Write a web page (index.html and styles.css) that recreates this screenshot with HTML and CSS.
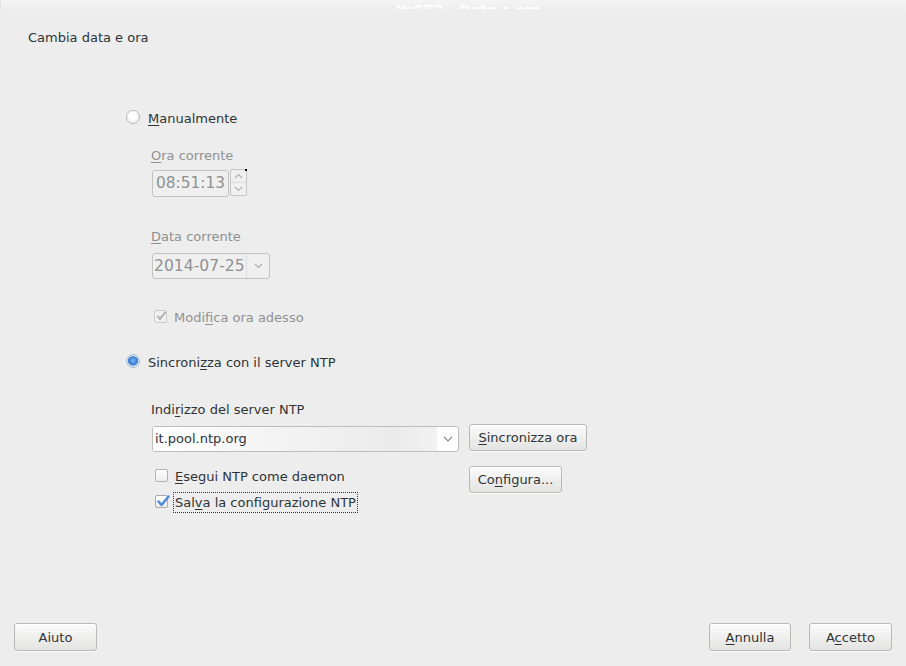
FILE: index.html
```html
<!DOCTYPE html>
<html lang="it">
<head>
<meta charset="utf-8">
<title>Data e ora</title>
<link rel="stylesheet" href="styles.css">
</head>
<body>
<div class="titlebar"><span class="titletext">YaST2 - Data e ora</span></div>
<div class="heading">Cambia data e ora</div>

<div class="options">
  <div class="radio-row">
    <span class="radio"></span>
    <span class="label"><u>M</u>anualmente</span>
  </div>

  <div class="sub">
    <div class="field-label disabled"><u>O</u>ra corrente</div>
    <div class="spin">
      <div class="spin-entry">08:51:13</div>
      <div class="spin-buttons">
        <span class="spin-btn"><svg width="9" height="6" viewBox="0 0 9 6"><path d="M1 5 L4.5 1.5 L8 5" fill="none" stroke="#b4b4b4" stroke-width="1.2"/></svg></span>
        <span class="spin-btn"><svg width="9" height="6" viewBox="0 0 9 6"><path d="M1 1 L4.5 4.5 L8 1" fill="none" stroke="#b4b4b4" stroke-width="1.2"/></svg></span>
        <span class="spin-dot"></span>
      </div>
    </div>

    <div class="field-label disabled date-label"><u>D</u>ata corrente</div>
    <div class="combo-date">
      <span class="combo-text">2014-07-25</span>
      <span class="combo-arrow"><svg width="9" height="6" viewBox="0 0 9 6"><path d="M1 1 L4.5 4.5 L8 1" fill="none" stroke="#b0b0b0" stroke-width="1.2"/></svg></span>
    </div>

    <div class="check-row disabled modifica">
      <span class="checkbox disabled-box"><svg width="12" height="12" viewBox="0 0 12 12"><path d="M2.5 6 L5 9 L10.5 2" fill="none" stroke="#a9a9a9" stroke-width="1.8"/></svg></span>
      <span class="label">Modi<u>f</u>ica ora adesso</span>
    </div>
  </div>

  <div class="radio-row ntp-radio">
    <span class="radio selected"></span>
    <span class="label">Sincroni<u>z</u>za con il server NTP</span>
  </div>

  <div class="sub">
    <div class="field-label server-label">Indi<u>r</u>izzo del server NTP</div>
    <div class="ntp-row">
      <div class="combo-ntp">
        <span class="ntp-entry">it.pool.ntp.org</span>
        <span class="ntp-arrow"><svg width="10" height="6" viewBox="0 0 10 6"><path d="M1 1 L5 5 L9 1" fill="none" stroke="#8a8a8a" stroke-width="1.2"/></svg></span>
      </div>
      <button class="btn sync-btn"><u>S</u>incronizza ora</button>
    </div>
    <div class="ntp-row2">
      <div class="checks">
        <div class="check-row">
          <span class="checkbox"></span>
          <span class="label"><u>E</u>segui NTP come daemon</span>
        </div>
        <div class="check-row">
          <span class="checkbox checked"><svg width="14" height="13" viewBox="0 0 14 13"><path d="M2.5 6.5 L5.5 10 L12.5 1.5" fill="none" stroke="#4a8ad8" stroke-width="2.4" stroke-linecap="round" stroke-linejoin="round"/></svg></span>
          <span class="label focus">Sal<u>v</u>a la configurazione NTP</span>
        </div>
      </div>
      <button class="btn conf-btn">Co<u>n</u>figura...</button>
    </div>
  </div>
</div>

<div class="spacer"></div>

<div class="footer">
  <button class="btn foot-btn">Aiuto</button>
  <div class="foot-right">
    <button class="btn foot-btn annulla"><u>A</u>nnulla</button>
    <button class="btn foot-btn accetto">A<u>c</u>cetto</button>
  </div>
</div>
</body>
</html>
```

FILE: styles.css
```css
html, body {
  margin: 0;
  padding: 0;
}
body {
  width: 906px;
  height: 666px;
  background: #ededed;
  font-family: "DejaVu Sans", "Liberation Sans", sans-serif;
  font-size: 13px;
  color: #2e3436;
  display: flex;
  flex-direction: column;
  overflow: hidden;
}
u {
  text-decoration: underline;
  text-underline-offset: 2px;
  text-decoration-thickness: 1px;
}
.titlebar {
  height: 9px;
  background: linear-gradient(#f4f4f4, #eeeeee);
  overflow: hidden;
  display: flex;
  justify-content: center;
  align-items: flex-end;
  border-left: 1px solid #e2e2e2;
}
.titletext {
  color: #ffffff;
  font-weight: bold;
  font-size: 14px;
  line-height: 14px;
  margin-bottom: -8px;
  padding-left: 30px;
}
.heading {
  margin-top: 21px;
  padding-left: 28px;
  line-height: 16px;
  font-size: 13px;
}
.options {
  padding-left: 126px;
  margin-top: 63px;
  display: flex;
  flex-direction: column;
}
.radio-row {
  display: flex;
  align-items: center;
  height: 18px;
}
.radio-row .label {
  margin-left: 8px;
}
.radio {
  width: 12px;
  height: 12px;
  border-radius: 50%;
  border: 1px solid #b9b9b6;
  background: radial-gradient(circle at 50% 40%, #ffffff 30%, #e6e6e4 100%);
  box-shadow: inset 0 1px 0 #ffffff;
  flex: none;
  margin-top: -2px;
}
.radio.selected {
  border: 1px solid #a8bad2;
  background: radial-gradient(circle at 50% 45%, #7fb2ee 0%, #3b7fd6 45%, #4f88d0 55%, #d9e4f2 62%, #e8eef6 100%);
}
.sub {
  padding-left: 25px;
  display: flex;
  flex-direction: column;
  align-items: flex-start;
}
.field-label {
  line-height: 16px;
  margin-top: 21px;
}
.disabled {
  color: #8f9192;
}
.spin {
  display: flex;
  margin-top: 6px;
  margin-left: 1px;
}
.spin-entry {
  width: 77px;
  border: 1px solid #c3c3c1;
  border-radius: 3px;
  box-sizing: border-box;
  height: 27px;
  line-height: 25px;
  padding-left: 3px;
  color: #8f9192;
  background: #efefef;
  font-size: 15.4px;
  white-space: nowrap;
  overflow: hidden;
}
.spin-buttons {
  position: relative;
  width: 17px;
  height: 27px;
  margin-top: -1px;
  margin-left: 1px;
  border: 1px solid #c6c6c4;
  border-radius: 2px;
  box-sizing: border-box;
  display: flex;
  flex-direction: column;
  background: #f0f0f0;
}
.spin-btn {
  flex: 1;
  display: flex;
  align-items: center;
  justify-content: center;
}
.spin-btn + .spin-btn {
  border-top: 1px solid #dedede;
}
.spin-dot {
  position: absolute;
  right: -1px;
  top: -1px;
  width: 2px;
  height: 2px;
  background: #000;
}
.date-label {
  margin-top: 32px;
}
.combo-date {
  margin-top: 8px;
  margin-left: 1px;
  width: 118px;
  height: 26px;
  box-sizing: border-box;
  border: 1px solid #c3c3c1;
  border-radius: 3px;
  display: flex;
  align-items: center;
  background: #efefef;
}
.combo-text {
  color: #8f9192;
  width: 94px;
  padding-left: 1px;
  box-sizing: border-box;
  border-right: 1px solid #dcdcdc;
  height: 24px;
  line-height: 24px;
  font-size: 15.6px;
  white-space: nowrap;
  overflow: hidden;
}
.combo-arrow {
  flex: 1;
  display: flex;
  justify-content: center;
  align-items: center;
}
.check-row {
  display: flex;
  align-items: center;
  height: 20px;
  padding-left: 3px;
}
.check-row .label {
  margin-left: 7px;
}
.modifica {
  margin-top: 29px;
  height: 18px;
}
.checkbox {
  width: 11px;
  height: 11px;
  border: 1px solid #b2b2b0;
  border-radius: 2px;
  background: linear-gradient(#ffffff, #ececec);
  flex: none;
  position: relative;
  margin-top: -2px;
}
.checkbox svg {
  position: absolute;
  left: 0;
  top: -1px;
}
.checkbox.disabled-box {
  border-color: #cbcbca;
  background: #f0f0f0;
}
.checkbox.checked {
  border-color: #a9a9a9;
}
.ntp-radio {
  margin-top: 27px;
}
.server-label {
  margin-top: 31px;
}
.ntp-row {
  display: flex;
  align-items: flex-start;
  margin-top: 6px;
  margin-left: 1px;
}
.combo-ntp {
  margin-top: 2px;
  width: 307px;
  height: 26px;
  box-sizing: border-box;
  border: 1px solid #bdbdbb;
  border-radius: 3px;
  display: flex;
  background: #ffffff;
}
.ntp-entry {
  width: 282px;
  padding-left: 2px;
  line-height: 24px;
  color: #2e3436;
  background: linear-gradient(to right, #ffffff 0%, #f4f4f4 40%, #ebebeb 85%, #f2f2f2 100%);
  border-radius: 2px 0 0 2px;
}
.ntp-arrow {
  flex: 1;
  display: flex;
  align-items: center;
  justify-content: center;
}
.btn {
  font-family: "DejaVu Sans", "Liberation Sans", sans-serif;
  font-size: 13px;
  color: #2e3436;
  border: 1px solid #b9b9b6;
  border-radius: 3px;
  background: linear-gradient(#fbfbfb, #e3e3e2);
  box-shadow: inset 0 1px 0 #ffffff, 0 1px 0 rgba(255,255,255,0.8);
  padding: 0;
  height: 28px;
  box-sizing: border-box;
  margin: 0;
}
.sync-btn {
  margin-left: 10px;
  width: 118px;
  height: 27px;
}
.ntp-row2 {
  display: flex;
  margin-top: 14px;
  margin-left: 1px;
}
.checks {
  width: 317px;
  display: flex;
  flex-direction: column;
  padding-top: 0;
  gap: 6px;
}
.label.focus {
  outline: 1px dotted #2e3436;
  outline-offset: 0;
  padding: 2px 1px 2px 1px;
  margin-left: 6px !important;
}
.conf-btn {
  width: 93px;
  height: 27px;
}
.spacer {
  flex: 1;
}
.footer {
  display: flex;
  justify-content: space-between;
  padding: 0 14px 15px 14px;
}
.foot-right {
  display: flex;
  gap: 18px;
}
.foot-btn {
  width: 83px;
  height: 28px;
}
.foot-btn.annulla {
  width: 82px;
}
```
